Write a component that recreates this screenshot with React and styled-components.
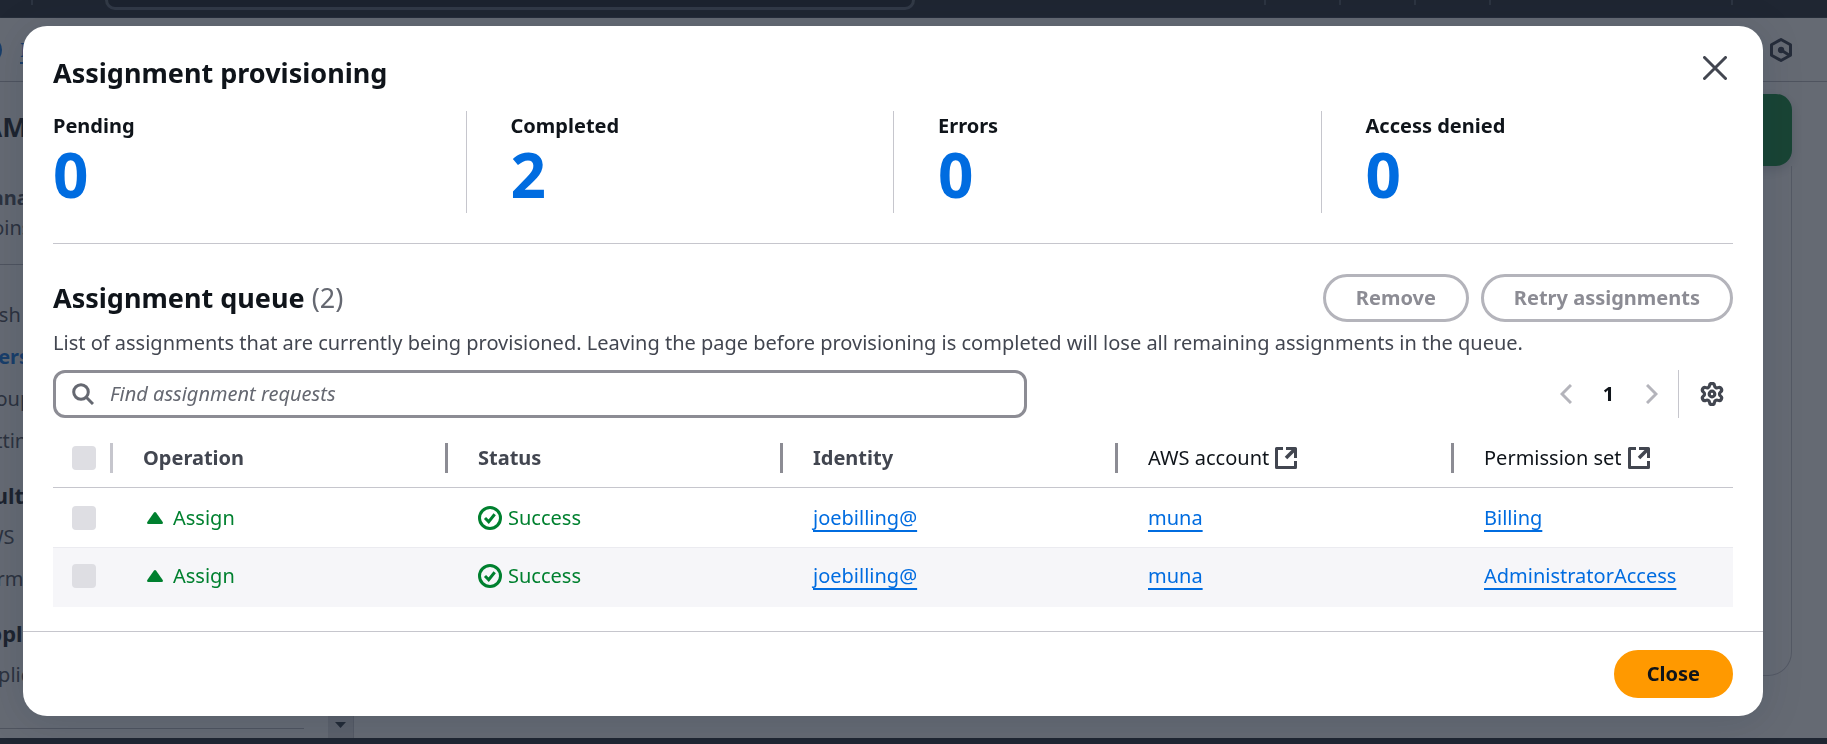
import React from 'react';
import styled, { createGlobalStyle } from 'styled-components';

const GlobalStyle = createGlobalStyle`
  *, *::before, *::after { box-sizing: border-box; }
  body {
    margin: 0;
    overflow: hidden;
    background: #ffffff;
    color: #0f141a;
    font-family: 'Noto Sans', 'Open Sans', sans-serif;
    font-size: 20px;
    line-height: 30px;
  }
  h1, h2, h3, p, dl, dd, ul { margin: 0; padding: 0; }
  button, input { font: inherit; }
`;

/* ---------- Console page behind the dialog ---------- */

const Page = styled.div`
  display: flex;
  flex-direction: column;
  height: 100vh;
  overflow: hidden;
`;

const TopBar = styled.header`
  display: flex;
  align-items: flex-start;
  justify-content: space-between;
  height: 18px;
  flex: none;
  padding: 0 94px 0 31px;
  background: #161d26;
  border-bottom: 1px solid #2a333f;
`;

const TopBarGroup = styled.div`
  display: flex;
  align-items: flex-start;
  gap: ${(p) => p.$gap}px;
`;

const TopBarDivider = styled.span`
  width: 2px;
  height: 5px;
  background: #424b57;
`;

const TopSearch = styled.div`
  width: 810px;
  height: 10px;
  background: #0c131c;
  border: 3px solid #545e6a;
  border-top: 0;
  border-radius: 0 0 12px 12px;
`;

const Breadcrumbs = styled.div`
  display: flex;
  align-items: center;
  justify-content: space-between;
  height: 64px;
  flex: none;
  margin-left: -26px;
  padding-right: 35px;
  border-bottom: 1px solid #b4b4bb;
`;

const BreadcrumbTrail = styled.div`
  display: flex;
  align-items: center;
  gap: 18px;
`;

const MenuDot = styled.span`
  width: 28px;
  height: 28px;
  border-radius: 50%;
  background: #006ce0;
`;

const Workspace = styled.div`
  display: flex;
  flex: 1;
  min-height: 0;
`;

const Sidebar = styled.aside`
  display: flex;
  justify-content: space-between;
  flex: none;
  width: 381px;
  margin-left: -27px;
  border-right: 1px solid #c6c6cd;
`;

const SideContent = styled.div`
  width: 331px;
  align-self: flex-start;
  padding: 27px 0 38px;
  color: #424650;
  border-bottom: 1px solid #b4b4bb;
  white-space: nowrap;
`;

const SideTitle = styled.h2`
  color: #0f141a;
  font-size: 27px;
  font-weight: 700;
  line-height: 36px;
`;

const InstanceInfo = styled.div`
  padding: 38px 0 21px;
  border-bottom: 1px solid #b4b4bb;
  strong { display: block; font-weight: 700; }
`;

const SideLinks = styled.ul`
  display: flex;
  flex-direction: column;
  gap: 12px;
  list-style: none;
  padding-top: ${(p) => p.$top}px;
`;

const SideHeading = styled.li`
  color: #0f141a;
  font-size: 22px;
  font-weight: 700;
`;

const SideLink = styled.a`
  color: ${(p) => (p.$active ? '#006ce0' : '#424650')};
  font-weight: ${(p) => (p.$active ? 700 : 400)};
  text-decoration: none;
`;

const ScrollTrack = styled.div`
  display: flex;
  align-items: flex-end;
  justify-content: center;
  width: 25px;
  padding-bottom: 10px;
  background: #dedee3;
`;

const ContentArea = styled.main`
  display: flex;
  flex-direction: column;
  flex: 1;
  padding: 12px 35px 62px;
`;

const SuccessFlash = styled.div`
  height: 72px;
  border-radius: 16px;
  background: #00802f;
  box-shadow: 0 4px 12px rgba(0, 28, 56, 0.2);
`;

const ContentCard = styled.section`
  flex: 1;
  border: 1px solid #c6c6cd;
  border-top: 0;
  border-radius: 0 0 24px 24px;
`;

const ConsoleFooter = styled.footer`
  height: 6px;
  flex: none;
  background: #161d26;
`;

/* ---------- Dialog ---------- */

const Overlay = styled.div`
  position: fixed;
  inset: 0;
  padding: 26px 64px 28px 23px;
  background: rgba(35, 43, 55, 0.7);
`;

const Dialog = styled.section`
  background: #ffffff;
  border-radius: 24px;
  box-shadow: 0 4px 42px 1px rgba(0, 28, 56, 0.14);
`;

const DialogBody = styled.div`
  padding: 24px 30px;
`;

const DialogHeader = styled.div`
  display: flex;
  align-items: flex-start;
  justify-content: space-between;
`;

const DialogTitle = styled.h1`
  padding-top: 5px;
  font-size: 27px;
  font-weight: 700;
  line-height: 36px;
`;

const IconButton = styled.button`
  display: flex;
  align-items: center;
  justify-content: center;
  width: ${(p) => p.$width}px;
  height: 36px;
  padding: 0;
  border: 0;
  background: transparent;
  color: ${(p) => (p.disabled ? '#b4b4bb' : '#424650')};
`;

const Stats = styled.dl`
  display: grid;
  grid-template-columns: repeat(4, 1fr);
  margin: 20px -15px 0;
`;

const Stat = styled.div`
  padding: 0 15px 6px 44px;
  border-left: 1px solid #c6c6cd;
  &:first-child {
    padding-left: 15px;
    border-left: 0;
  }
`;

const StatLabel = styled.dt`
  font-weight: 700;
`;

const StatValue = styled.dd`
  color: #006ce0;
  font-size: 62px;
  font-weight: 700;
  line-height: 66px;
`;

const Divider = styled.hr`
  height: 1px;
  margin: 30px 0;
  border: 0;
  background: #c6c6cd;
`;

const QueueHeader = styled.div`
  display: flex;
  align-items: center;
  justify-content: space-between;
`;

const QueueTitle = styled.h2`
  font-size: 27px;
  font-weight: 700;
  line-height: 36px;
  span { color: #656871; font-weight: 400; }
`;

const Actions = styled.div`
  display: flex;
  gap: 12px;
`;

const Button = styled.button`
  height: 48px;
  padding: 0 30px;
  border: 3px solid ${(p) => (p.$primary ? '#ff9900' : '#b4b4bb')};
  border-radius: 24px;
  background: ${(p) => (p.$primary ? '#ff9900' : '#ffffff')};
  color: ${(p) => (p.$primary ? '#0f141a' : '#8c8c94')};
  font-weight: 700;
`;

const Description = styled.p`
  padding: 6px 0 12px;
  color: #424650;
`;

const Toolbar = styled.div`
  display: flex;
  align-items: center;
  justify-content: space-between;
`;

const SearchBox = styled.label`
  display: flex;
  align-items: center;
  gap: 16px;
  width: 58%;
  height: 48px;
  padding: 0 16px;
  border: 3px solid #8c8c94;
  border-radius: 12px;
  color: #656871;
`;

const SearchInput = styled.input`
  flex: 1;
  min-width: 0;
  padding: 0;
  border: 0;
  outline: 0;
  background: transparent;
  color: #0f141a;
  &::placeholder {
    color: #656871;
    font-style: italic;
    opacity: 1;
  }
`;

const Pagination = styled.nav`
  display: flex;
  align-items: center;
`;

const PageNumber = styled.button`
  width: 43px;
  padding: 0;
  border: 0;
  background: transparent;
  color: #0f141a;
  font-weight: 700;
`;

const ToolDivider = styled.span`
  width: 1px;
  height: 48px;
  margin: 0 12px 0 5px;
  background: #c6c6cd;
`;

const Table = styled.table`
  width: 100%;
  margin-top: 12px;
  border-collapse: separate;
  border-spacing: 0;
  table-layout: fixed;
`;

const Column = styled.col`
  width: ${(p) => p.$width};
`;

const HeaderCell = styled.th`
  height: 58px;
  padding: 0 0 1px;
  border-bottom: 1px solid #c6c6cd;
  color: ${(p) => (p.$plain ? '#0f141a' : '#424650')};
  font-weight: ${(p) => (p.$plain ? 400 : 700)};
  text-align: left;
`;

const HeaderInner = styled.div`
  display: flex;
  align-items: center;
  gap: 6px;
  height: 30px;
  padding-left: ${(p) => (p.$select ? 19 : 30)}px;
  border-right: ${(p) => (p.$last ? 0 : 3)}px solid ${(p) => (p.$select ? '#c6c6cd' : '#8c8c94')};
`;

const Row = styled.tr`
  td {
    height: 60px;
    padding: 0 0 0 30px;
    border-bottom: 1px solid #ebebf0;
  }
  td:first-child { padding-left: 19px; }
  &:last-child td {
    height: 59px;
    padding-bottom: 4px;
    background: #f6f6f9;
    border-bottom: 0;
  }
`;

const Checkbox = styled.input`
  appearance: none;
  display: block;
  width: 24px;
  height: 24px;
  margin: 0;
  border-radius: 4px;
  background: #dedee3;
`;

const StatusText = styled.span`
  display: flex;
  align-items: center;
  gap: ${(p) => p.$gap}px;
  padding-left: ${(p) => p.$indent || 0}px;
  color: #00802f;
`;

const Link = styled.a`
  color: #006ce0;
  text-decoration: underline;
  text-decoration-thickness: 2px;
  text-decoration-skip-ink: none;
  text-underline-offset: 5px;
`;

const DialogFooter = styled.div`
  display: flex;
  justify-content: flex-end;
  padding: 18px 30px;
  border-top: 1px solid #c6c6cd;
`;

/* ---------- Icons ---------- */

const CloseIcon = () => (
  <svg width="24" height="24" viewBox="0 0 24 24" fill="none" stroke="currentColor" strokeWidth="3" strokeLinecap="round">
    <path d="M1.5 1.5 22.5 22.5M22.5 1.5 1.5 22.5" />
  </svg>
);

const SearchIcon = () => (
  <svg width="22" height="22" viewBox="0 0 22 22" fill="none" stroke="currentColor" strokeWidth="3">
    <circle cx="9" cy="9" r="7.3" />
    <path d="M14 14 21 21" />
  </svg>
);

const Chevron = ({ d }) => (
  <svg width="12" height="20" viewBox="0 0 12 20" fill="none" stroke="currentColor" strokeWidth="3">
    <path d={d} />
  </svg>
);

const GearIcon = () => (
  <svg width="24" height="24" viewBox="0.8 0.8 22.4 22.4" fill="none" stroke="currentColor" strokeWidth="3" strokeLinejoin="round">
    <path d="M9.671 4.136a2.34 2.34 0 0 1 4.659 0 2.34 2.34 0 0 0 3.319 1.915 2.34 2.34 0 0 1 2.33 4.033 2.34 2.34 0 0 0 0 3.831 2.34 2.34 0 0 1-2.33 4.033 2.34 2.34 0 0 0-3.319 1.915 2.34 2.34 0 0 1-4.659 0 2.34 2.34 0 0 0-3.32-1.915 2.34 2.34 0 0 1-2.33-4.033 2.34 2.34 0 0 0 0-3.831A2.34 2.34 0 0 1 6.35 6.051a2.34 2.34 0 0 0 3.319-1.915" />
    <circle cx="12" cy="12" r="2.6" />
  </svg>
);

const ExternalIcon = () => (
  <svg width="22" height="22" viewBox="0 0 22 22" fill="none" stroke="#424650" strokeWidth="3">
    <path d="M8 1.5H1.5v19h19V14" strokeLinejoin="round" />
    <path d="M11 1.5h9.5V11" strokeLinejoin="round" />
    <path d="M20 2 11 11" strokeWidth="3.6" />
  </svg>
);

const UpIcon = () => (
  <svg width="16" height="12" viewBox="0 0 16 12" fill="currentColor">
    <path d="M6.8.8Q8-.7 9.2.8L15.7 10q.8 2-1 2H1.3q-1.8 0-1-2z" />
  </svg>
);

const SuccessIcon = () => (
  <svg width="24" height="24" viewBox="0 0 24 24" fill="none" stroke="currentColor" strokeWidth="3">
    <circle cx="12" cy="12" r="10.5" />
    <path d="M7 12l3.7 3.700 6-7.400" />
  </svg>
);

const HexIcon = () => (
  <svg width="22" height="24" viewBox="0 0 22 24" fill="none" stroke="#2a3140" strokeWidth="3" strokeLinejoin="round">
    <path d="M11 1.500 20.500 6.800V17.200L11 22.500 1.500 17.200V6.800Z" />
    <circle cx="11" cy="12" r="3.200" fill="#2a3140" stroke="none" />
    <path d="M11 12l8 5" />
  </svg>
);

const ArrowDown = () => (
  <svg width="11" height="6" viewBox="0 0 11 6" fill="#232b37">
    <path d="M0 0h11L5.500 6z" />
  </svg>
);

/* ---------- Data ---------- */

const stats = [
  ['Pending', 0],
  ['Completed', 2],
  ['Errors', 0],
  ['Access denied', 0],
];

const columns = [
  { label: 'Operation' },
  { label: 'Status' },
  { label: 'Identity' },
  { label: 'AWS account', external: true },
  { label: 'Permission set', external: true },
];

const requests = [
  { identity: 'joebilling@', account: 'muna', permission: 'Billing' },
  { identity: 'joebilling@', account: 'muna', permission: 'AdministratorAccess' },
];

function ConsolePage() {
  return (
    <Page aria-hidden="true">
      <TopBar>
        <TopBarGroup $gap={72}>
          <TopBarDivider />
          <TopSearch />
        </TopBarGroup>
        <TopBarGroup $gap={240}>
          <TopBarGroup $gap={73}>
            <TopBarDivider />
            <TopBarDivider />
            <TopBarDivider />
            <TopBarDivider />
          </TopBarGroup>
          <TopBarDivider />
        </TopBarGroup>
      </TopBar>
      <Breadcrumbs>
        <BreadcrumbTrail>
          <MenuDot />
          <Link href="#home">IAM</Link>
        </BreadcrumbTrail>
        <HexIcon />
      </Breadcrumbs>
      <Workspace>
        <Sidebar>
          <SideContent>
            <SideTitle>IAM</SideTitle>
            <InstanceInfo>
              <strong>Managed</strong>
              ssoins
            </InstanceInfo>
            <SideLinks $top={35}>
              <li><SideLink href="#dashboard">Dash</SideLink></li>
              <li><SideLink href="#users" $active>Users</SideLink></li>
              <li><SideLink href="#groups">Groups</SideLink></li>
              <li><SideLink href="#settings">Settings</SideLink></li>
            </SideLinks>
            <SideLinks $top={24}>
              <SideHeading>Multi</SideHeading>
              <li><SideLink href="#accounts">AWS</SideLink></li>
              <li><SideLink href="#permissions">Permission</SideLink></li>
            </SideLinks>
            <SideLinks $top={24}>
              <SideHeading>Application</SideHeading>
              <li><SideLink href="#applications">Applications</SideLink></li>
            </SideLinks>
          </SideContent>
          <ScrollTrack><ArrowDown /></ScrollTrack>
        </Sidebar>
        <ContentArea>
          <SuccessFlash />
          <ContentCard />
        </ContentArea>
      </Workspace>
      <ConsoleFooter />
    </Page>
  );
}

export default function App() {
  return (
    <>
      <GlobalStyle />
      <ConsolePage />
      <Overlay>
        <Dialog role="dialog" aria-modal="true" aria-labelledby="dialog-title">
          <DialogBody>
            <DialogHeader>
              <DialogTitle id="dialog-title">Assignment provisioning</DialogTitle>
              <IconButton type="button" $width={36} aria-label="Close dialog"><CloseIcon /></IconButton>
            </DialogHeader>

            <Stats>
              {stats.map(([label, value]) => (
                <Stat key={label}>
                  <StatLabel>{label}</StatLabel>
                  <StatValue>{value}</StatValue>
                </Stat>
              ))}
            </Stats>
            <Divider />

            <QueueHeader>
              <QueueTitle>Assignment queue <span>(2)</span></QueueTitle>
              <Actions>
                <Button type="button" disabled>Remove</Button>
                <Button type="button" disabled>Retry assignments</Button>
              </Actions>
            </QueueHeader>
            <Description>
              List of assignments that are currently being provisioned. Leaving the page before
              provisioning is completed will lose all remaining assignments in the queue.
            </Description>

            <Toolbar>
              <SearchBox>
                <SearchIcon />
                <SearchInput type="text" placeholder="Find assignment requests" aria-label="Find assignment requests" />
              </SearchBox>
              <Pagination aria-label="Pagination">
                <IconButton type="button" $width={43} disabled aria-label="Previous page">
                  <Chevron d="M11 1 2 10l9 9" />
                </IconButton>
                <PageNumber type="button" aria-current="page">1</PageNumber>
                <IconButton type="button" $width={43} disabled aria-label="Next page">
                  <Chevron d="M1 1l9 9-9 9" />
                </IconButton>
                <ToolDivider />
                <IconButton type="button" $width={42} aria-label="Preferences"><GearIcon /></IconButton>
              </Pagination>
            </Toolbar>

            <Table>
              <colgroup>
                <Column $width="60px" />
                <Column $width="335px" />
                <Column $width="335px" />
                <Column $width="335px" />
                <Column $width="336px" />
                <Column $width="auto" />
              </colgroup>
              <thead>
                <tr>
                  <HeaderCell scope="col">
                    <HeaderInner $select>
                      <Checkbox type="checkbox" disabled aria-label="Select all requests" />
                    </HeaderInner>
                  </HeaderCell>
                  {columns.map(({ label, external }, i) => (
                    <HeaderCell key={label} scope="col" $plain={external}>
                      <HeaderInner $last={i === columns.length - 1}>
                        {label}
                        {external && <ExternalIcon />}
                      </HeaderInner>
                    </HeaderCell>
                  ))}
                </tr>
              </thead>
              <tbody>
                {requests.map(({ identity, account, permission }) => (
                  <Row key={permission}>
                    <td><Checkbox type="checkbox" disabled aria-label={`Select ${permission}`} /></td>
                    <td><StatusText $gap={10} $indent={4}><UpIcon />Assign</StatusText></td>
                    <td><StatusText $gap={6}><SuccessIcon />Success</StatusText></td>
                    <td><Link href="#identity">{identity}</Link></td>
                    <td><Link href="#account">{account}</Link></td>
                    <td><Link href="#permission">{permission}</Link></td>
                  </Row>
                ))}
              </tbody>
            </Table>
          </DialogBody>
          <DialogFooter>
            <Button type="button" $primary>Close</Button>
          </DialogFooter>
        </Dialog>
      </Overlay>
    </>
  );
}
